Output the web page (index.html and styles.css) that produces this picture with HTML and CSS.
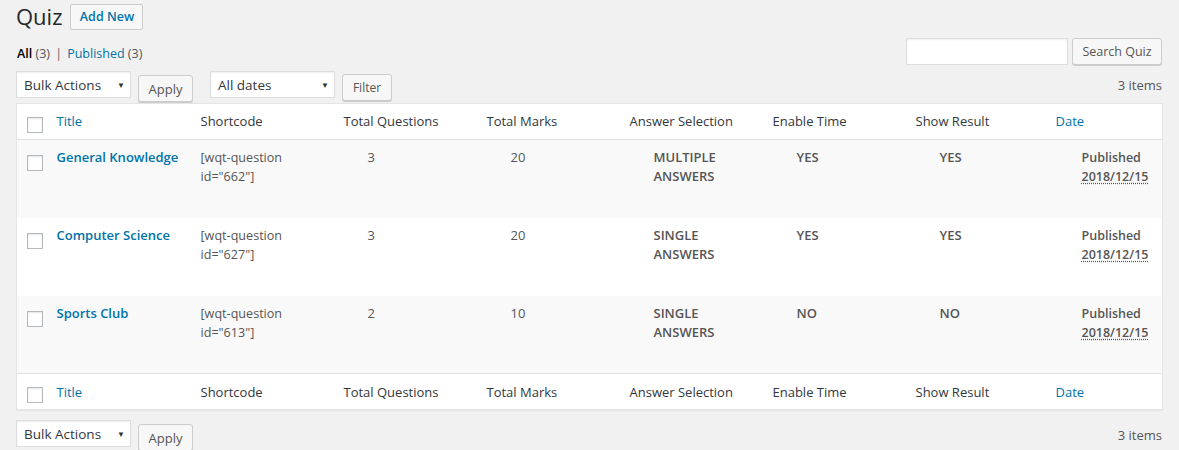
FILE: index.html
```html
<!DOCTYPE html>
<html>
<head>
<meta charset="utf-8">
<link rel="stylesheet" href="styles.css">
</head>
<body>
<div class="wrap">
  <div class="heading">
    <h1 class="title">Quiz</h1>
    <a class="btn add-new" href="#">Add New</a>
  </div>
  <div class="filters-row">
    <ul class="subsubsub">
      <li><a class="current" href="#">All <span class="count">(3)</span></a> <span class="sep">|</span></li>
      <li><a href="#">Published <span class="count">(3)</span></a></li>
    </ul>
    <div class="search-box">
      <input class="search-input" type="text">
      <button class="btn search-btn">Search Quiz</button>
    </div>
  </div>
  <div class="tablenav top">
    <div class="actions">
      <div class="select bulk">Bulk Actions<span class="arrow">▼</span></div>
      <button class="btn apply">Apply</button>
    </div>
    <div class="actions">
      <div class="select dates">All dates<span class="arrow">▼</span></div>
      <button class="btn filter">Filter</button>
    </div>
    <div class="count-items">3 items</div>
  </div>
  <table class="list">
    <colgroup>
      <col class="c-cb"><col class="c-std"><col class="c-std"><col class="c-std"><col class="c-std"><col class="c-std"><col class="c-std"><col class="c-std"><col class="c-date">
    </colgroup>
    <thead>
      <tr>
        <th class="cb"><span class="checkbox"></span></th>
        <th class="t-title"><a href="#">Title</a></th>
        <th>Shortcode</th>
        <th>Total Questions</th>
        <th>Total Marks</th>
        <th>Answer Selection</th>
        <th>Enable Time</th>
        <th>Show Result</th>
        <th class="t-date"><a href="#">Date</a></th>
      </tr>
    </thead>
    <tbody>
      <tr class="alt">
        <td class="cb"><span class="checkbox"></span></td>
        <td class="t-title"><a class="row-title" href="#">General Knowledge</a></td>
        <td class="code">[wqt-question id="662"]</td>
        <td class="val">3</td>
        <td class="val">20</td>
        <td class="val strong">MULTIPLE ANSWERS</td>
        <td class="val strong">YES</td>
        <td class="val strong">YES</td>
        <td class="date strong">Published<br><abbr>2018/12/15</abbr></td>
      </tr>
      <tr>
        <td class="cb"><span class="checkbox"></span></td>
        <td class="t-title"><a class="row-title" href="#">Computer Science</a></td>
        <td class="code">[wqt-question id="627"]</td>
        <td class="val">3</td>
        <td class="val">20</td>
        <td class="val strong">SINGLE ANSWERS</td>
        <td class="val strong">YES</td>
        <td class="val strong">YES</td>
        <td class="date strong">Published<br><abbr>2018/12/15</abbr></td>
      </tr>
      <tr class="alt">
        <td class="cb"><span class="checkbox"></span></td>
        <td class="t-title"><a class="row-title" href="#">Sports Club</a></td>
        <td class="code">[wqt-question id="613"]</td>
        <td class="val">2</td>
        <td class="val">10</td>
        <td class="val strong">SINGLE ANSWERS</td>
        <td class="val strong">NO</td>
        <td class="val strong">NO</td>
        <td class="date strong">Published<br><abbr>2018/12/15</abbr></td>
      </tr>
    </tbody>
    <tfoot>
      <tr>
        <th class="cb"><span class="checkbox"></span></th>
        <th class="t-title"><a href="#">Title</a></th>
        <th>Shortcode</th>
        <th>Total Questions</th>
        <th>Total Marks</th>
        <th>Answer Selection</th>
        <th>Enable Time</th>
        <th>Show Result</th>
        <th class="t-date"><a href="#">Date</a></th>
      </tr>
    </tfoot>
  </table>
  <div class="tablenav bottom">
    <div class="actions">
      <div class="select bulk">Bulk Actions<span class="arrow">▼</span></div>
      <button class="btn apply">Apply</button>
    </div>
    <div class="count-items">3 items</div>
  </div>
</div>
</body>
</html>
```
FILE: styles.css
```css
* { box-sizing: border-box; }
html, body { margin: 0; padding: 0; }
body {
  background: #f1f1f1;
  font-family: "Open Sans", "Noto Sans", sans-serif;
  font-size: 13px;
  color: #444;
  width: 1179px;
  height: 450px;
  overflow: hidden;
}
a { color: #0073aa; text-decoration: none; }
.wrap { padding: 0 17px 0 16px; }

.heading { display: flex; align-items: center; height: 32px; padding-top: 1px; }
.title { margin: 0; font-size: 22px; font-weight: 400; color: #23282d; line-height: 29px; }
.btn {
  display: inline-flex; align-items: center; justify-content: center;
  height: 27px; padding: 0 10px;
  background: #f7f7f7; border: 1px solid #ccc; border-radius: 3px;
  box-shadow: 0 1px 0 #ccc;
  font-family: inherit; font-size: 12.5px; color: #555;
}
.add-new { margin-left: 8px; height: 26px; width: 73px; padding: 0; color: #0073aa; font-weight: 600; box-shadow: none; border-radius: 2px; }

.filters-row { display: flex; justify-content: space-between; align-items: flex-start; margin-top: 6px; height: 33px; }
.subsubsub { list-style: none; margin: 7px 0 0; padding: 0 0 0 1px; display: flex; color: #666; font-size: 12.5px; }
.subsubsub li { white-space: pre; }
.subsubsub a.current { color: #000; font-weight: 600; }
.subsubsub .count { color: #555; font-weight: 400; }
.subsubsub .sep { margin: 0 5px 0 2px; color: #666; }
.search-box { display: flex; gap: 4px; }
.search-input { width: 162px; height: 27px; border: 1px solid #ddd; background: #fff; box-shadow: inset 0 1px 2px rgba(0,0,0,.07); margin: 0; }
.search-btn { width: 90px; padding: 0; }

.tablenav { display: flex; align-items: flex-start; height: 32px; }
.actions { display: flex; align-items: flex-start; gap: 7px; margin-right: 17px; }
.select {
  position: relative; height: 27px; display: flex; align-items: center;
  padding: 0 0 0 7px; background: #fff; border: 1px solid #ddd;
  box-shadow: inset 0 1px 2px rgba(0,0,0,.07);
  color: #32373c; font-size: 13.5px;
}
.select .arrow { position: absolute; right: 5px; top: 7px; font-size: 8px; color: #333; }
.bulk { width: 115px; }
.dates { width: 125px; }
.apply { margin-top: 4px; width: 55px; padding: 0; font-size: 13px; }
.filter { margin-top: 3px; width: 50px; padding: 0; font-size: 12px; }
.count-items { margin-left: auto; margin-top: 5px; color: #555; font-size: 13px; }

.list {
  width: 1146px; table-layout: fixed; border-collapse: collapse;
  background: #fff; border: 1px solid #e5e5e5;
  box-shadow: 0 1px 1px rgba(0,0,0,.04);
}
.c-cb { width: 32px; }
.c-std { width: 143px; }
.c-date { width: 113px; }
.list th { font-weight: 400; text-align: left; color: #32373c; font-size: 13px; height: 36px; padding: 0 9px; }
.list thead th { border-bottom: 1px solid #e1e1e1; padding-bottom: 1px; }
.list tfoot th { border-top: 1px solid #e1e1e1; }
.list th.cb, .list td.cb { padding: 0 0 0 10px; }
.list .t-title { padding-left: 8px; padding-right: 2px; }
.list th.t-date { padding-left: 6px; }
.checkbox { display: block; width: 16px; height: 16px; border: 1px solid #b4b9be; background: #fff; box-shadow: inset 0 1px 2px rgba(0,0,0,.1); }
.list th .checkbox { margin-top: 7px; }
.list td { vertical-align: top; height: 78px; padding: 8px 9px 0; color: #555; font-size: 13px; line-height: 19px; }
.list td.cb { padding-top: 15px; }
.list td.code { font-size: 12.6px; }
.list tbody tr.alt { background: #f9f9f9; }
.row-title { font-weight: 600; font-size: 13px; }
.list td.val { padding-left: 33px; }
.list td.date { padding-left: 32px; font-size: 12.5px; }
.strong { font-weight: 600; }
abbr { text-decoration: underline dotted; text-underline-offset: 2px; }

.bottom { margin-top: 10px; }
.bottom .count-items { margin-top: 6px; }
```
